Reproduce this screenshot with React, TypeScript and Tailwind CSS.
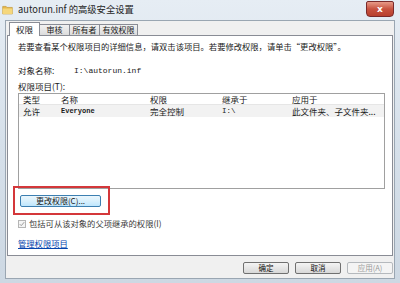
import React from 'react';

const cjk = { fontFamily: '"Noto Sans CJK SC", "Noto Sans", sans-serif' };
const mono = { fontFamily: '"Liberation Mono", "DejaVu Sans Mono", monospace' };

const FolderIcon = () => (
    <svg width="11" height="11" viewBox="0 0 16 16">
        <path d="M1 3.5h5l1.5 1.5H15v9.5H1z" fill="#e6b84a" stroke="#b88a22" strokeWidth="0.8" />
        <path d="M1 6.5h14v8H1z" fill="#f5d77c" />
    </svg>
);

const tabs = [
    { label: '权限', w: 'w-[31px]' },
    { label: '审核', w: 'w-[30px]' },
    { label: '所有者', w: 'w-[30px]' },
    { label: '有效权限', w: 'w-[38px]' },
];

const columns = [
    { key: 'type', label: '类型', w: 'w-[38px]' },
    { key: 'name', label: '名称', w: 'w-[89px]' },
    { key: 'perm', label: '权限', w: 'w-[72px]' },
    { key: 'from', label: '继承于', w: 'w-[70px]' },
    { key: 'apply', label: '应用于', w: 'flex-1' },
];

const rows = [
    { type: '允许', name: 'Everyone', perm: '完全控制', from: 'I:\\', apply: '此文件夹、子文件夹...' },
];

const WinButton = ({ children, disabled = false }: { children: React.ReactNode; disabled?: boolean }) => (
    <button
        className={`w-[46px] h-[12px] rounded-[2px] border text-[7.5px] leading-none flex items-center justify-center ${
            disabled
                ? 'border-[#b5b9bd] bg-[#f4f4f4] text-[#9a9a9a]'
                : 'border-[#707070] bg-gradient-to-b from-[#f4f4f4] to-[#d8d8d8] text-[#111]'
        }`}
        style={cjk}
    >
        {children}
    </button>
);

export default function App() {
    return (
        <div className="w-[400px] h-[283px] overflow-hidden bg-gradient-to-b from-[#e6edf4] via-[#d6e0ea] to-[#cdd8e3] text-[#1a1a1a]" style={cjk}>
            {/* title bar */}
            <div className="h-[20px] flex items-start">
                <div className="mt-[4px] ml-[2px]"><FolderIcon /></div>
                <span className="ml-[5px] mt-[2px] text-[9.3px] leading-[14px] text-[#1e1e1e]">autorun.inf 的高级安全设置</span>
                <div className="ml-auto mr-[6px] mt-[1px] w-[28px] h-[16px] rounded-b-[4px] rounded-t-[2px] border border-[#7a2a2a] bg-gradient-to-b from-[#e79a88] via-[#c8523f] to-[#b8402e] flex items-center justify-center">
                    <span className="text-white text-[9px] font-bold leading-none" style={{ fontFamily: '"DejaVu Sans", sans-serif' }}>x</span>
                </div>
            </div>

            {/* client area */}
            <div className="mx-[5px] h-[259px] bg-[#f0f0f0] border border-[#9aa6b2] flex flex-col">
                {/* tab strip */}
                <div className="h-[14px] flex items-end pl-[3px]">
                    {tabs.map((t, i) =>
                        i === 0 ? (
                            <div key={t.label} className={`${t.w} h-[14px] flex justify-center bg-white border border-b-0 border-[#898c95] text-[8.5px] leading-[12px] relative top-[1px] z-10`}>
                                {t.label}
                            </div>
                        ) : (
                            <div key={t.label} className={`${t.w} h-[11px] flex justify-center bg-gradient-to-b from-[#f2f2f2] to-[#dcdcdc] border border-b-0 border-l-0 border-[#898c95] text-[8px] leading-[10px] whitespace-nowrap`}>
                                {t.label}
                            </div>
                        )
                    )}
                </div>

                {/* tab panel */}
                <div className="mx-[1px] h-[221px] bg-white border border-[#898c95] pl-[10px] pr-[6px] pt-[5px] flex flex-col">
                    <p className="text-[8.3px] leading-[11px] whitespace-nowrap">若要查看某个权限项目的详细信息，请双击该项目。若要修改权限，请单击“更改权限”。</p>

                    <div className="mt-[13px] flex items-center text-[8.5px] leading-[11px]">
                        <span className="w-[56px]">对象名称:</span>
                        <span className="text-[8px]" style={mono}>I:\autorun.inf</span>
                    </div>

                    <div className="mt-[5px] text-[8.5px] leading-[11px]">权限项目(T):</div>

                    {/* list */}
                    <div className="mt-[1px] w-[367px] h-[96px] border border-[#a0a0a0] flex flex-col">
                        <div className="h-[11px] flex items-center pl-[4px] text-[8.5px] border-b border-[#e6e6e6]">
                            {columns.map(c => (
                                <span key={c.key} className={`${c.w} leading-[11px]`}>{c.label}</span>
                            ))}
                        </div>
                        {rows.map(r => (
                            <div key={r.name} className="h-[12px] flex items-center pl-[4px] bg-[#f2f2f2] text-[8.5px]">
                                <span className="w-[38px] leading-[11px]">{r.type}</span>
                                <span className="w-[89px] text-[7px] font-bold leading-[11px]" style={mono}>{r.name}</span>
                                <span className="w-[72px] leading-[11px]">{r.perm}</span>
                                <span className="w-[70px] text-[7.5px] leading-[11px]" style={mono}>{r.from}</span>
                                <span className="flex-1 leading-[11px] whitespace-nowrap">{r.apply}</span>
                            </div>
                        ))}
                    </div>

                    {/* highlighted change button */}
                    <div className="mt-[-3px] ml-[-5px] w-[97px] h-[29px] border-2 border-[#d4373a] flex items-center pl-[5px]">
                        <button className="w-[81px] h-[12px] rounded-[2px] border border-[#3c7fb1] bg-gradient-to-b from-[#eaf6fd] via-[#d9f0fc] to-[#bee6fd] text-[8px] leading-none flex items-center justify-center">
                            更改权限(C)...
                        </button>
                    </div>

                    <label className="mt-[3px] flex items-center gap-[3px] text-[8.3px] leading-[11px] text-[#3a3a3a]">
                        <span className="w-[8px] h-[8px] border border-[#b5b5b5] bg-[#f4f4f4] flex items-center justify-center">
                            <svg width="6" height="6" viewBox="0 0 8 8">
                                <path d="M1 4.2l2 2L7 1.5" fill="none" stroke="#9a9a9a" strokeWidth="1.3" />
                            </svg>
                        </span>
                        包括可从该对象的父项继承的权限(I)
                    </label>

                    <a className="mt-[9px] text-[8.3px] leading-[11px] text-[#0645ad] underline w-fit">管理权限项目</a>
                </div>

                {/* footer buttons */}
                <div className="flex justify-end gap-[6px] pr-[1px] mt-[6px]">
                    <WinButton>确定</WinButton>
                    <WinButton>取消</WinButton>
                    <WinButton disabled>应用(A)</WinButton>
                </div>
            </div>
        </div>
    );
}
